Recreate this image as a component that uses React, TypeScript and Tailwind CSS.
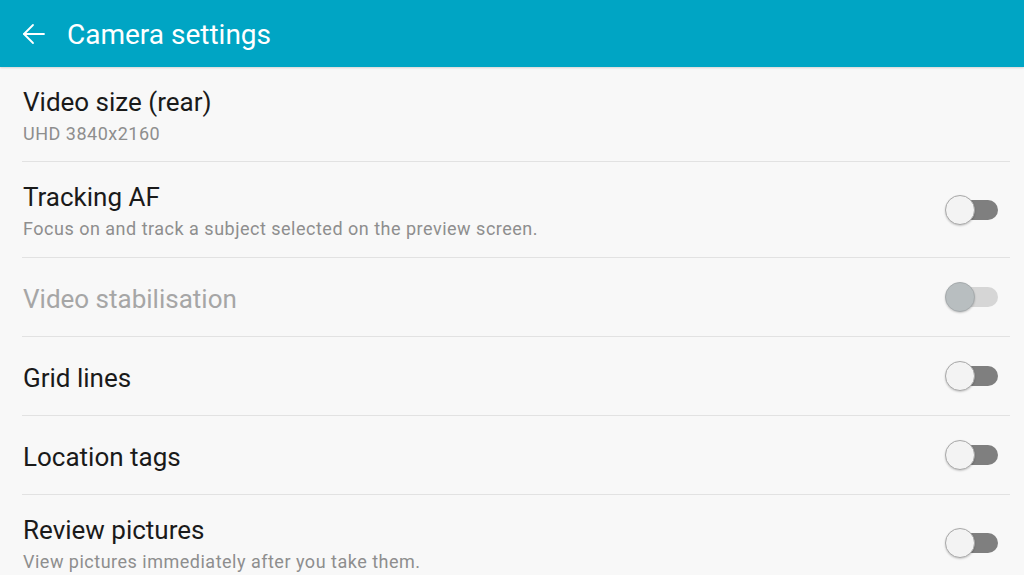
import React from 'react';

type Row = {
  title: string;
  sub?: string;
  toggle?: boolean;
  disabled?: boolean;
  h: string;
};

const rows: Row[] = [
  { title: 'Video size (rear)', sub: 'UHD 3840x2160', h: 'h-[95px]' },
  { title: 'Tracking AF', sub: 'Focus on and track a subject selected on the preview screen.', toggle: true, h: 'h-[96px]' },
  { title: 'Video stabilisation', toggle: true, disabled: true, h: 'h-[79px]' },
  { title: 'Grid lines', toggle: true, h: 'h-[79px]' },
  { title: 'Location tags', toggle: true, h: 'h-[79px]' },
  { title: 'Review pictures', sub: 'View pictures immediately after you take them.', toggle: true, h: 'h-[96px]' },
];

function Toggle({ disabled }: { disabled?: boolean }) {
  return (
    <div className="relative w-[53px] h-[30px] shrink-0">
      <div
        className={`absolute left-[10px] top-[5px] w-[43px] h-[20px] rounded-full ${
          disabled ? 'bg-[#d6d6d6]' : 'bg-[#7f7f7f]'
        }`}
      />
      <div
        className={`absolute left-0 top-0 w-[30px] h-[30px] rounded-full border ${
          disabled ? 'bg-[#b8bec0] border-[#a6abad]' : 'bg-[#f3f3f3] border-[#a9a9a9]'
        } shadow-[0_1px_2px_rgba(0,0,0,0.2)]`}
      />
    </div>
  );
}

export default function App() {
  return (
    <div className="w-[1024px] h-[575px] overflow-hidden bg-[#f8f8f8] font-['Roboto',sans-serif]">
      <div className="h-[67px] bg-[#00a5c4] flex items-center pl-[22px] shadow-[0_1px_2px_rgba(0,0,0,0.15)]">
        <svg width="24" height="24" viewBox="0 0 24 24" fill="none" stroke="#ffffff" strokeWidth="1.8" strokeLinecap="round" strokeLinejoin="round">
          <path d="M22 12H2" />
          <path d="M11 3l-9 9 9 9" />
        </svg>
        <span className="ml-[21px] mt-[2px] text-[28px] text-white">Camera settings</span>
      </div>
      <div className="pl-[22px] pr-[14px]">
        {rows.map((r, i) => (
          <div
            key={i}
            className={`${r.h} flex items-center border-b border-[#e2e2e2]`}
          >
            <div className="flex-1 flex flex-col pl-[1px] pt-[3px]">
              <span className={`text-[26px] leading-[32px] ${r.disabled ? 'text-[#a6a6a6]' : 'text-[#1a1a1a]'}`}>
                {r.title}
              </span>
              {r.sub && (
                <span className="text-[18px] leading-[24px] mt-[4px] tracking-[0.5px] text-[#8e8e8e]">{r.sub}</span>
              )}
            </div>
            {r.toggle && (
              <div className="mr-[12px]">
                <Toggle disabled={r.disabled} />
              </div>
            )}
          </div>
        ))}
      </div>
    </div>
  );
}
